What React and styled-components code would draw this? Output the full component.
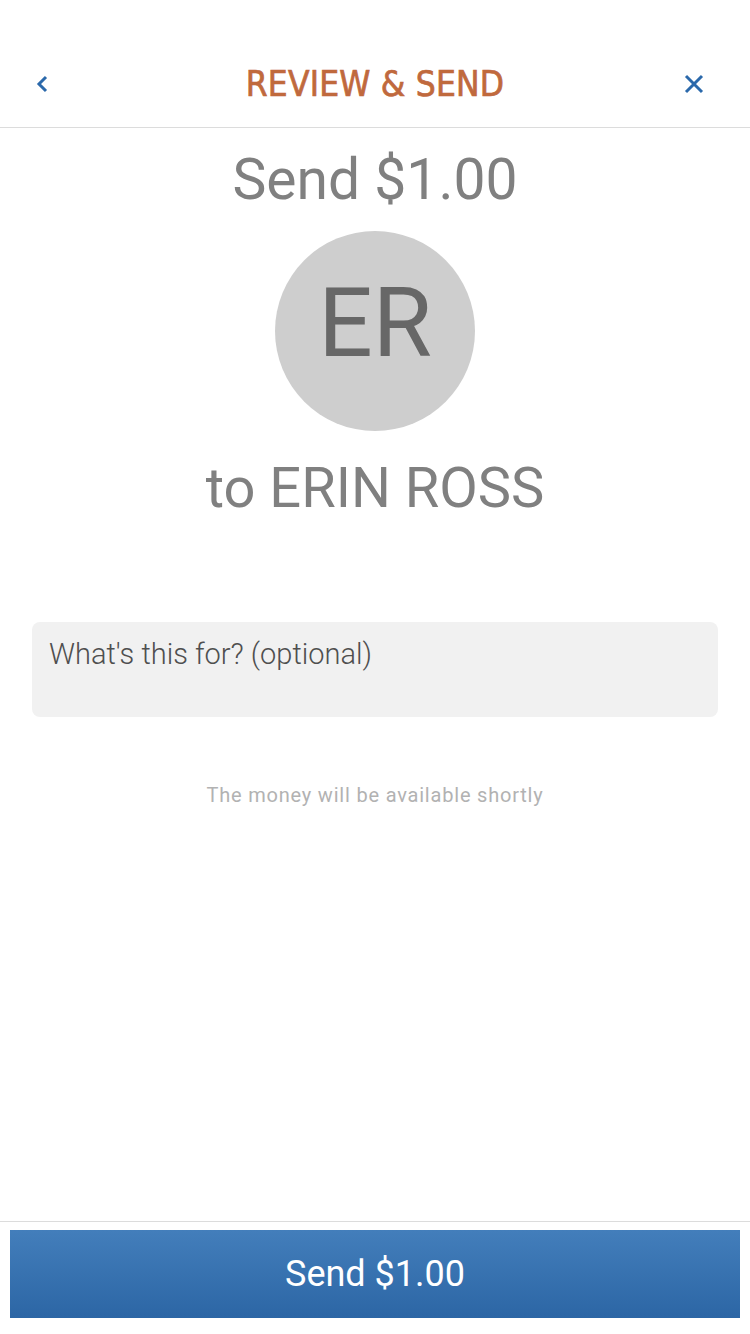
import React from "react";
import styled, { createGlobalStyle } from "styled-components";

const GlobalStyle = createGlobalStyle`
  html, body {
    margin: 0;
    padding: 0;
    background: #ffffff;
  }
  body {
    font-family: Roboto, "Liberation Sans", sans-serif;
  }
`;

function App() {
  const amount = "$1.00";
  const name = "ERIN ROSS";

  return (
    <Screen>
      <GlobalStyle />
      <Header>
        <IconButton aria-label="back" $side="start">
          <svg width="16" height="18" viewBox="0 0 16 18">
            <path d="M11 2 L4 9 L11 16" fill="none" stroke="#2b69ab" strokeWidth="3" />
          </svg>
        </IconButton>
        <Title>REVIEW &amp; SEND</Title>
        <IconButton aria-label="close" $side="end">
          <svg width="20" height="20" viewBox="0 0 20 20">
            <path d="M2 2 L18 18 M18 2 L2 18" fill="none" stroke="#2b69ab" strokeWidth="3" />
          </svg>
        </IconButton>
      </Header>

      <Body>
        <Amount>Send {amount}</Amount>
        <Avatar>ER</Avatar>
        <Recipient>to {name}</Recipient>
        <NoteBox placeholder="What's this for? (optional)" />
        <Hint>The money will be available shortly</Hint>
      </Body>

      <Footer>
        <SendButton>Send {amount}</SendButton>
      </Footer>
    </Screen>
  );
}

const Screen = styled.div`
  display: flex;
  flex-direction: column;
  min-height: 100vh;
  background: #fff;
`;

const Header = styled.div`
  display: grid;
  grid-template-columns: 1fr auto 1fr;
  align-items: center;
  height: 87px;
  padding: 40px 41px 0 28px;
  border-bottom: 1px solid #dcdcdc;
`;

const IconButton = styled.button`
  justify-self: ${(p) => p.$side};
  display: flex;
  align-items: center;
  justify-content: center;
  width: 30px;
  height: 30px;
  padding: 0;
  border: none;
  background: none;
`;

const Title = styled.h1`
  margin: 0 0 0 13px;
  font-family: "DejaVu Sans Condensed", "Liberation Sans Narrow", sans-serif;
  font-stretch: condensed;
  font-weight: 400;
  font-size: 35px;
  letter-spacing: 0.2px;
  color: #c0693d;
  -webkit-text-stroke: 0.7px #c0693d;
`;

const Body = styled.div`
  flex: 1;
  display: flex;
  flex-direction: column;
  align-items: center;
  padding: 18px 32px 0;
`;

const Amount = styled.div`
  font-size: 57px;
  line-height: 68px;
  color: #808080;
`;

const Avatar = styled.div`
  box-sizing: border-box;
  display: flex;
  align-items: center;
  justify-content: center;
  width: 200px;
  height: 200px;
  margin-top: 17px;
  padding-bottom: 16px;
  border-radius: 50%;
  background: #cecece;
  color: #676767;
  font-size: 96px;
`;

const Recipient = styled.div`
  margin-top: 23px;
  font-size: 56px;
  line-height: 68px;
  color: #808080;
`;

const NoteBox = styled.textarea`
  box-sizing: border-box;
  width: 100%;
  height: 95px;
  margin-top: 100px;
  padding: 15px 17px;
  border: none;
  border-radius: 8px;
  background: #f1f1f1;
  resize: none;
  outline: none;
  font-family: Roboto, "Liberation Sans", sans-serif;
  font-weight: 300;
  font-size: 29px;
  color: #555;

  &::placeholder {
    color: #4f4f4f;
  }
`;

const Hint = styled.div`
  margin-top: 66px;
  font-size: 20px;
  letter-spacing: 0.8px;
  color: #b2b2b2;
`;

const Footer = styled.div`
  padding: 8px 10px 16px;
  border-top: 1px solid #dcdcdc;
`;

const SendButton = styled.button`
  width: 100%;
  height: 88px;
  border: none;
  background: linear-gradient(#437ebb, #2c66a5);
  color: #fff;
  font-family: Roboto, "Liberation Sans", sans-serif;
  font-size: 36px;
`;

export default App;
